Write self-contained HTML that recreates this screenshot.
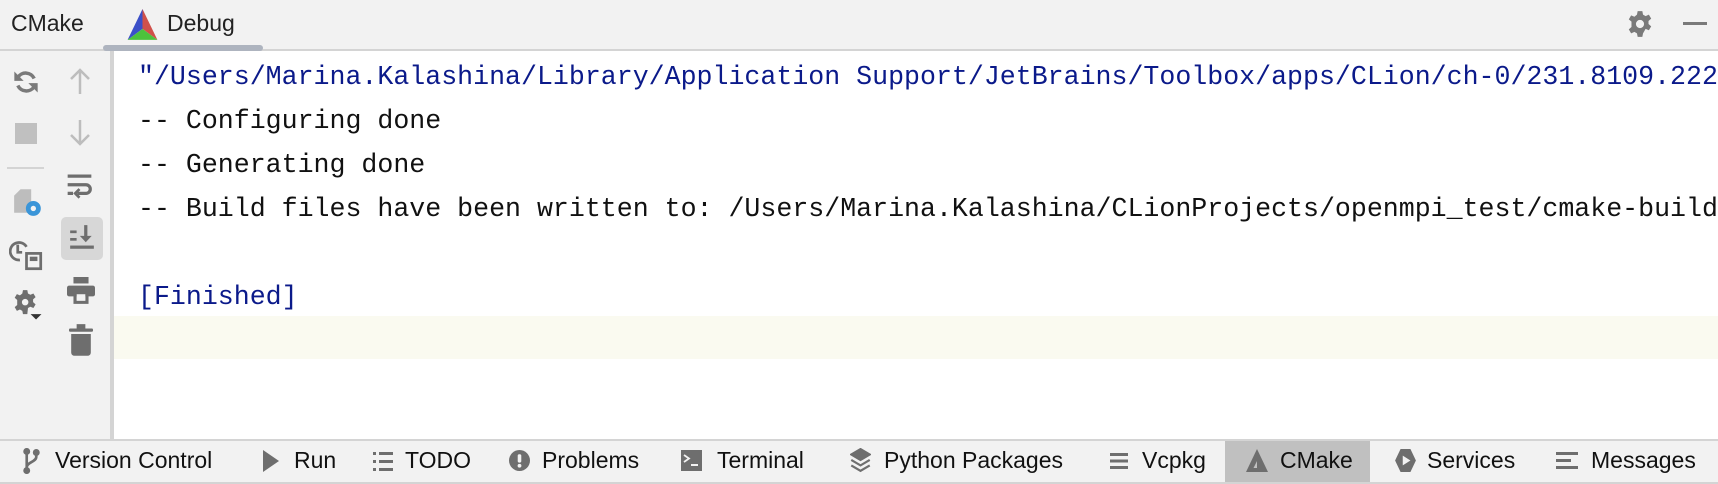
<!DOCTYPE html>
<html><head><meta charset="utf-8"><style>
*{margin:0;padding:0;box-sizing:border-box}
body{width:1718px;height:484px;overflow:hidden;background:#fff;font-family:"Liberation Sans",sans-serif;position:relative}
.top{position:absolute;left:0;top:0;width:1718px;height:51px;background:#f2f2f2;border-bottom:2px solid #d4d4d4}
.t{position:absolute;font-size:23px;color:#222;top:10px}
.left{position:absolute;left:0;top:51px;width:114px;height:388px;background:#f2f2f2;border-right:4px solid #d4d4d4}
.code{position:absolute;left:138px;top:55px;font-family:"Liberation Mono",monospace;font-size:26.6px;color:#111}
.code div{height:44px;line-height:44px;white-space:pre}
.blue{color:#0b1a8a}
.hl{position:absolute;left:114px;top:316px;width:1604px;height:43px;background:#fafaf0}
.bot{position:absolute;left:0;top:439px;width:1718px;height:45px;background:#f2f2f2;border-top:2px solid #d4d4d4;border-bottom:2px solid #d4d4d4}
.b{position:absolute;top:6px;font-size:23px;color:#111}
.ic{position:absolute}
</style></head><body>
<div class="top">
<div class="t" style="left:11px">CMake</div>
<svg class="ic" style="left:127px;top:9px" width="31" height="32" viewBox="0 0 27 29"><polygon points="13.5,0 0,28 13.5,18" fill="#3b4fc8"/><polygon points="13.5,0 27,28 13.5,18" fill="#d0504a"/><polygon points="0,28 27,28 13.5,18" fill="#4cc23c"/></svg>
<div class="t" style="left:167px">Debug</div>
<div style="position:absolute;left:103px;top:45px;width:160px;height:6px;border-radius:3px;background:#aeb4bf"></div>
<svg class="ic" style="left:1626px;top:10px" width="28" height="28" viewBox="0 0 24 24"><path fill="#7a7a7a" d="M10 1h4l.6 3 2.2 1.2 2.8-1.2 2 3.4-2.3 2 0 2.6 2.3 2-2 3.4-2.8-1.2L14.6 20 14 23h-4l-.6-3-2.2-1.2-2.8 1.2-2-3.4 2.3-2V10L2.4 8l2-3.4 2.8 1.2L9.4 4zM12 8.5a3.5 3.5 0 1 0 0 7 3.5 3.5 0 0 0 0-7z"/></svg>
<div style="position:absolute;left:1683px;top:22px;width:24px;height:3px;background:#7a7a7a"></div>
</div>
<div class="left">
<svg class="ic" style="left:12px;top:17px" width="28" height="28" viewBox="0 0 24 24" fill="none" stroke="#7a7a7a" stroke-width="3"><path d="M19 9a8 8 0 0 0-14-1M5 15a8 8 0 0 0 14 1"/><path fill="#7a7a7a" stroke="none" d="M2 3v8h8zM22 21v-8h-8z"/></svg>
<svg class="ic" style="left:68px;top:15px" width="24" height="30" viewBox="0 0 24 28" stroke="#bdbdbd" stroke-width="2.5" fill="none"><path d="M12 27V3M3 12l9-9 9 9"/></svg>
<div style="position:absolute;left:15px;top:72px;width:22px;height:21px;background:#c0c0c0"></div>
<svg class="ic" style="left:68px;top:67px" width="24" height="30" viewBox="0 0 24 28" stroke="#bdbdbd" stroke-width="2.5" fill="none"><path d="M12 1v24M3 16l9 9 9-9"/></svg>
<div style="position:absolute;left:7px;top:116px;width:37px;height:2px;background:#d4d4d4"></div>
<svg class="ic" style="left:66px;top:123px" width="27" height="28" viewBox="0 0 24 26" fill="none" stroke="#6e6e6e" stroke-width="3"><path d="M1 2h22M1 10h17a4 4 0 0 1 0 8h-8M1 18h5"/><path d="M12 14l-4 4 4 4" stroke-width="2.5"/></svg>
<svg class="ic" style="left:12px;top:134px" width="32" height="32" viewBox="0 0 30 30"><path fill="#bdbdbd" d="M2 10l6-6h10v22H2z"/><circle cx="20" cy="22" r="7" fill="#3a95d8"/><circle cx="20" cy="22" r="2.5" fill="#f2f2f2"/></svg>
<div style="position:absolute;left:61px;top:166px;width:42px;height:43px;background:#d7d7d7;border-radius:5px"></div>
<svg class="ic" style="left:69px;top:173px" width="26" height="28" viewBox="0 0 24 26" fill="#6e6e6e"><rect x="1" y="6" width="6" height="2.5"/><rect x="1" y="13" width="6" height="2.5"/><rect x="1" y="20" width="22" height="3"/><path d="M14 1h3v10h4l-5.5 6-5.5-6h4z"/></svg>
<svg class="ic" style="left:9px;top:187px" width="35" height="33" viewBox="0 0 32 30" fill="none" stroke="#6e6e6e" stroke-width="2.5"><path d="M16 8a8 8 0 1 0-6 12"/><path d="M8 6v7h4"/><rect x="16" y="14" width="13" height="14" fill="#f2f2f2"/><rect x="19" y="17" width="7" height="4" fill="#6e6e6e" stroke="none"/></svg>
<svg class="ic" style="left:67px;top:226px" width="28" height="28" viewBox="0 0 26 26" fill="#6e6e6e"><rect x="6" y="0" width="14" height="6"/><rect x="0" y="8" width="26" height="10" rx="2"/><path d="M6 13h14v12H6zM9 16v6h8v-6z"/><rect x="9" y="16" width="8" height="6" fill="#f2f2f2"/></svg>
<svg class="ic" style="left:11px;top:237px" width="37" height="37" viewBox="0 0 34 34"><path fill="#6e6e6e" d="M11 2h4l.6 3 2.2 1.2 2.8-1.2 2 3.4-2.3 2v2.6l2.3 2-2 3.4-2.8-1.2-2.2 1.2L15 24h-4l-.6-3-2.2-1.2-2.8 1.2-2-3.4 2.3-2V11L3.4 9l2-3.4 2.8 1.2L10.4 5zM13 10a3 3 0 1 0 0 6 3 3 0 0 0 0-6z"/><path fill="#333" d="M28 24l-5 5-5-5z"/></svg>
<svg class="ic" style="left:69px;top:273px" width="24" height="33" viewBox="0 0 22 30" fill="#6e6e6e"><rect x="0" y="4" width="22" height="3" rx="1"/><rect x="7" y="0" width="8" height="4"/><path d="M2 9h18v17a3 3 0 0 1-3 3H5a3 3 0 0 1-3-3z"/></svg>
</div>
<div class="hl"></div>
<div class="code"><div class="blue">"/Users/Marina.Kalashina/Library/Application Support/JetBrains/Toolbox/apps/CLion/ch-0/231.8109.222</div><div>-- Configuring done</div><div>-- Generating done</div><div>-- Build files have been written to: /Users/Marina.Kalashina/CLionProjects/openmpi_test/cmake-build</div><div> </div><div class="blue">[Finished]</div></div>
<div class="bot">
<svg class="ic" style="left:23px;top:7px" width="17" height="26" viewBox="0 0 16 24" fill="none" stroke="#6e6e6e" stroke-width="2.5"><circle cx="3.5" cy="3" r="2" fill="#6e6e6e"/><circle cx="3.5" cy="21" r="2" fill="#6e6e6e"/><circle cx="12.5" cy="4" r="2" fill="#6e6e6e"/><path d="M3.5 3v18M12.5 4v4c0 5-9 5-9 10"/></svg>
<div class="b" style="left:55px">Version Control</div>
<svg class="ic" style="left:263px;top:9px" width="16" height="22"><polygon points="0,0 16,11 0,22" fill="#6e6e6e"/></svg>
<div class="b" style="left:294px">Run</div>
<svg class="ic" style="left:373px;top:11px" width="20" height="19" fill="#6e6e6e"><rect x="0" y="0" width="3" height="3"/><rect x="6" y="0" width="14" height="3"/><rect x="0" y="8" width="3" height="3"/><rect x="6" y="8" width="14" height="3"/><rect x="0" y="16" width="3" height="3"/><rect x="6" y="16" width="14" height="3"/></svg>
<div class="b" style="left:405px">TODO</div>
<svg class="ic" style="left:509px;top:9px" width="21" height="21" viewBox="0 0 20 20"><circle cx="10" cy="10" r="10" fill="#6e6e6e"/><rect x="8.3" y="4" width="3.4" height="8" rx="1.5" fill="#f2f2f2"/><circle cx="10" cy="15" r="1.8" fill="#f2f2f2"/></svg>
<div class="b" style="left:542px">Problems</div>
<svg class="ic" style="left:681px;top:9px" width="21" height="21"><rect width="21" height="21" fill="#6e6e6e"/><path d="M3 5l5 3.5-5 3.5" stroke="#f2f2f2" stroke-width="1.8" fill="none"/><rect x="10" y="14" width="7" height="2" fill="#f2f2f2"/></svg>
<div class="b" style="left:717px">Terminal</div>
<svg class="ic" style="left:850px;top:7px" width="21" height="25" viewBox="0 0 19 23" fill="none" stroke="#6e6e6e" stroke-width="2"><path d="M9.5 1L18 6l-8.5 5L1 6z" fill="#6e6e6e"/><path d="M1 11l8.5 5 8.5-5M1 16l8.5 5 8.5-5"/></svg>
<div class="b" style="left:884px">Python Packages</div>
<svg class="ic" style="left:1110px;top:12px" width="18" height="16" fill="#6e6e6e"><rect y="0" width="18" height="3"/><rect y="6.5" width="18" height="3"/><rect y="13" width="18" height="3"/></svg>
<div class="b" style="left:1142px">Vcpkg</div>
<div style="position:absolute;left:1225px;top:0;width:145px;height:41px;background:#c0c0c0"></div>
<svg class="ic" style="left:1246px;top:8px" width="22" height="23"><polygon points="11,0 22,23 0,23" fill="#6e6e6e"/><polygon points="11,12 11,19 7.5,19" fill="#c0c0c0"/></svg>
<div class="b" style="left:1280px">CMake</div>
<svg class="ic" style="left:1395px;top:8px" width="21" height="23" viewBox="0 0 19 21"><polygon points="5,0 14,0 19,10.5 14,21 5,21 0,10.5" fill="#6e6e6e"/><polygon points="7,6 14,10.5 7,15" fill="#f2f2f2"/></svg>
<div class="b" style="left:1427px">Services</div>
<svg class="ic" style="left:1556px;top:11px" width="22" height="17" fill="#6e6e6e"><rect y="0" width="22" height="3"/><rect y="7" width="15" height="3"/><rect y="14" width="22" height="3"/></svg>
<div class="b" style="left:1591px">Messages</div>
</div>
</body></html>
